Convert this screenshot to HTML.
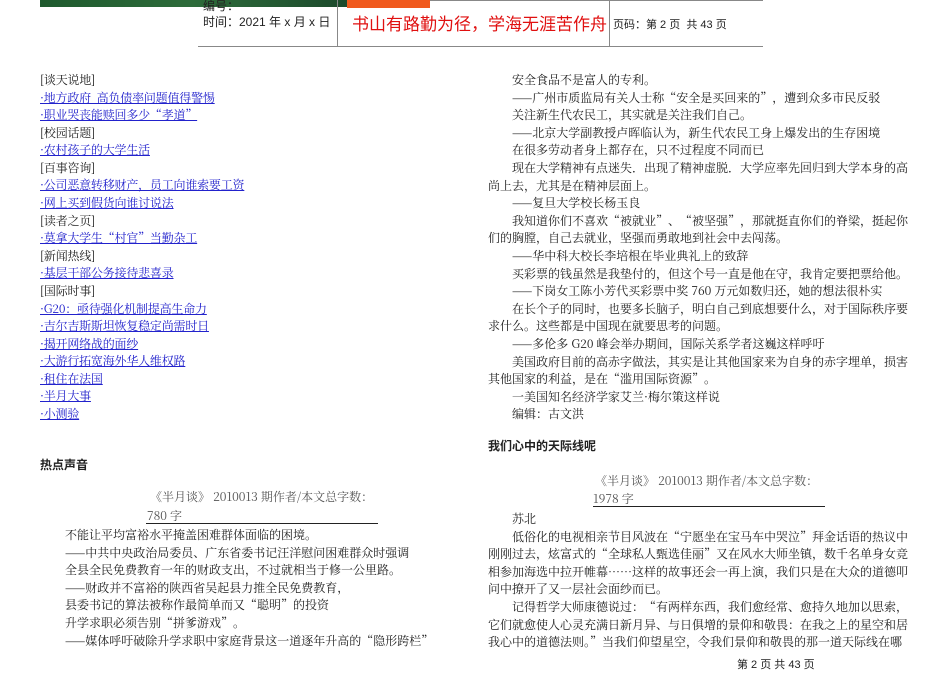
<!DOCTYPE html>
<html><head><meta charset="utf-8"><style>
body{margin:0;width:950px;height:672px;background:#fff;position:relative;overflow:hidden;font-family:"Noto Serif CJK SC","Liberation Serif",serif;font-size:12px;letter-spacing:0;color:#222}
.a{position:absolute;white-space:nowrap;line-height:16px}
.s{font-family:"Liberation Sans","Noto Sans CJK SC",sans-serif;letter-spacing:0}
.l{color:#2222cc;text-decoration:underline}
.b{font-family:"Liberation Sans","Noto Sans CJK SC",sans-serif;font-weight:bold;font-size:12px;letter-spacing:0}
.i{padding-left:24px}
</style></head><body>
<div style="position:absolute;left:40px;top:0;width:307px;height:7px;background:linear-gradient(90deg,#1f5a2e,#2d6b3a 50%,#1c4a2c)"></div>
<div style="position:absolute;left:347px;top:0;width:83px;height:8px;background:#f05a1e"></div>
<div style="position:absolute;left:430px;top:0;width:333px;height:1px;background:#888"></div>
<div style="position:absolute;left:198px;top:46px;width:565px;height:1px;background:#888"></div>
<div style="position:absolute;left:337px;top:0;width:1px;height:47px;background:#888"></div>
<div style="position:absolute;left:609px;top:0;width:1px;height:47px;background:#888"></div>
<div class="a s" style="left:203px;top:0;font-size:12px;line-height:12px">编号：</div>
<div class="a s" style="left:203px;top:14px;font-size:12px">时间：2021 年 x 月 x 日</div>
<div class="a s" style="left:352px;top:15px;font-size:17px;line-height:20px;color:#e01010">书山有路勤为径，学海无涯苦作舟</div>
<div class="a s" style="left:613px;top:17px;font-size:11px">页码：第 2 页&nbsp; 共 43 页</div>

<div class="a" style="left:40px;top:71px;line-height:17.58px;letter-spacing:-0.2px">[谈天说地]<br><span class="l">·地方政府&nbsp; 高负债率问题值得警惕</span><br><span class="l">·职业哭丧能赎回多少“孝道” </span><br>[校园话题]<br><span class="l">·农村孩子的大学生活</span><br>[百事咨询]<br><span class="l">·公司恶意转移财产，员工向谁索要工资</span><br><span class="l">·网上买到假货向谁讨说法</span><br>[读者之页]<br><span class="l">·莫拿大学生“村官”当勤杂工</span><br>[新闻热线]<br><span class="l">·基层干部公务接待悲喜录</span><br>[国际时事]<br><span class="l">·G20：亟待强化机制提高生命力</span><br><span class="l">·吉尔吉斯斯坦恢复稳定尚需时日</span><br><span class="l">·揭开网络战的面纱</span><br><span class="l">·大游行拓宽海外华人维权路</span><br><span class="l">·租住在法国</span><br><span class="l">·半月大事</span><br><span class="l">·小测验 </span></div>

<div class="a b" style="left:40px;top:457px">热点声音</div>
<div class="a" style="left:150px;top:489px;color:#555">《半月谈》 2010013 期作者/本文总字数：</div>
<div class="a" style="left:147px;top:508px;color:#555">780 字</div>
<div style="position:absolute;left:146px;top:523px;width:232px;height:1px;background:#222"></div>
<div class="a" style="left:65px;top:526px;line-height:17.6px">不能让平均富裕水平掩盖困难群体面临的困境。<br>——中共中央政治局委员、广东省委书记汪洋慰问困难群众时强调<br>全县全民免费教育一年的财政支出，不过就相当于修一公里路。<br>——财政并不富裕的陕西省吴起县力推全民免费教育，<br>县委书记的算法被称作最简单而又“聪明”的投资<br>升学求职必须告别“拼爹游戏”。<br>——媒体呼吁破除升学求职中家庭背景这一道逐年升高的“隐形跨栏”</div>

<div class="a" style="left:488px;top:71px;line-height:17.6px">
<span class="i">安全食品不是富人的专利。</span><br>
<span class="i">——广州市质监局有关人士称“安全是买回来的”，遭到众多市民反驳</span><br>
<span class="i">关注新生代农民工，其实就是关注我们自己。</span><br>
<span class="i">——北京大学副教授卢晖临认为，新生代农民工身上爆发出的生存困境</span><br>
<span class="i">在很多劳动者身上都存在，只不过程度不同而已</span><br>
<span class="i">现在大学精神有点迷失．出现了精神虚脱．大学应率先回归到大学本身的高</span><br>
尚上去，尤其是在精神层面上。<br>
<span class="i">——复旦大学校长杨玉良</span><br>
<span class="i">我知道你们不喜欢“被就业”、“被坚强”，那就挺直你们的脊梁，挺起你</span><br>
们的胸膛，自己去就业，坚强而勇敢地到社会中去闯荡。<br>
<span class="i">——华中科大校长李培根在毕业典礼上的致辞</span><br>
<span class="i">买彩票的钱虽然是我垫付的，但这个号一直是他在守，我肯定要把票给他。</span><br>
<span class="i">——下岗女工陈小芳代买彩票中奖 760 万元如数归还，她的想法很朴实</span><br>
<span class="i">在长个子的同时，也要多长脑子，明白自己到底想要什么，对于国际秩序要</span><br>
求什么。这些都是中国现在就要思考的问题。<br>
<span class="i">——多伦多 G20 峰会举办期间，国际关系学者这巍这样呼吁</span><br>
<span class="i">美国政府目前的高赤字做法，其实是让其他国家来为自身的赤字埋单，损害</span><br>
其他国家的利益，是在“滥用国际资源”。<br>
<span class="i">一美国知名经济学家艾兰·梅尔策这样说</span><br>
<span class="i">编辑：古文洪</span></div>

<div class="a b" style="left:488px;top:438px">我们心中的天际线呢</div>
<div class="a" style="left:595px;top:473px;color:#555">《半月谈》 2010013 期作者/本文总字数：</div>
<div class="a" style="left:593px;top:491px;color:#555">1978 字</div>
<div style="position:absolute;left:593px;top:506px;width:232px;height:1px;background:#222"></div>
<div class="a" style="left:488px;top:510px;line-height:17.6px">
<span class="i">苏北</span><br>
<span class="i">低俗化的电视相亲节目风波在“宁愿坐在宝马车中哭泣”拜金话语的热议中</span><br>
刚刚过去，炫富式的“全球私人甄选佳丽”又在风水大师坐镇，数千名单身女竞<br>
相参加海选中拉开帷幕……这样的故事还会一再上演，我们只是在大众的道德叩<br>
问中撩开了又一层社会面纱而已。<br>
<span class="i">记得哲学大师康德说过：“有两样东西，我们愈经常、愈持久地加以思索，</span><br>
它们就愈使人心灵充满日新月异、与日俱增的景仰和敬畏：在我之上的星空和居<br>
我心中的道德法则。”当我们仰望星空，令我们景仰和敬畏的那一道天际线在哪</div>
<div class="a s" style="left:737px;top:657px;font-size:11px">第 2 页 共 43 页</div>
</body></html>
